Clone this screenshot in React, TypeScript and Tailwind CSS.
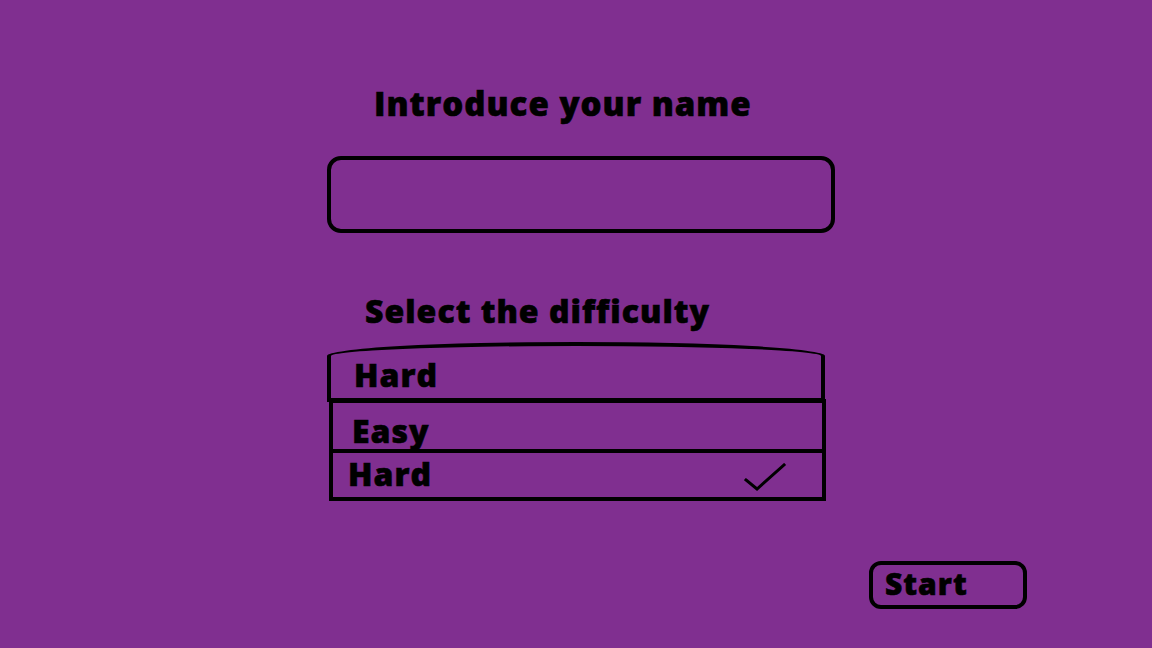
const font = { fontFamily: '"Open Sans", "DejaVu Sans", sans-serif' };

const App = () => {
  return (
    <div
      className="w-full h-[648px] bg-[#802f90] text-black overflow-hidden font-extrabold tracking-[1px] [-webkit-text-stroke:0.6px_black]"
      style={font}
    >
      {/* name */}
      <div className="pt-[87px] pl-[374px] h-[120px] text-[33px] leading-[33px]">
        Introduce your name
      </div>
      <div className="mt-[36px] ml-[327px] w-[508px] h-[77px] border-4 border-black rounded-[14px]" />

      {/* difficulty */}
      <div className="mt-[62px] ml-[365px] h-[32px] text-[32px] leading-[32px]">
        Select the difficulty
      </div>
      <div className="mt-[15px] ml-[327px] w-[498px] h-[60px] border-4 border-black rounded-t-[50%_14px] pl-[23px] pt-[9px] text-[32px] leading-[40px]">
        Hard
      </div>
      <div className="-mt-[3px] ml-[329px] w-[497px] border-4 border-black flex flex-col text-[32px]">
        <div className="h-[50px] pl-[19px] pt-[8px] leading-[40px] border-b-4 border-black">Easy</div>
        <div className="h-[44px] pl-[15px] flex items-center justify-between pr-[34px] leading-[40px]">
          <span className="-mt-[2px]">Hard</span>
          <svg width="44" height="30" viewBox="0 0 44 30" className="mt-[6px]">
            <path d="M2 17 L13 26 L40 2" fill="none" stroke="black" strokeWidth="3" strokeLinecap="square" />
          </svg>
        </div>
      </div>

      {/* start */}
      <div className="mt-[60px] ml-[869px] w-[158px] h-[48px] border-4 border-black rounded-[12px] pl-[12px] text-[30px] leading-[38px]">
        Start
      </div>
    </div>
  );
};

export default App;
